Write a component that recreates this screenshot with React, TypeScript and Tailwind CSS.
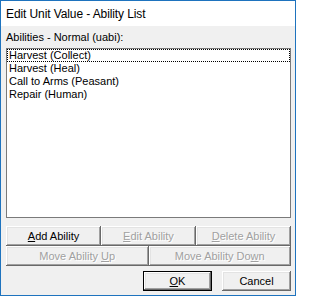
import React from "react";

const font = { fontFamily: '"Liberation Sans", Arial, sans-serif' };

function Btn({
  children,
  disabled,
  isDefault,
  className = "",
}: {
  children: React.ReactNode;
  disabled?: boolean;
  isDefault?: boolean;
  className?: string;
}) {
  return (
    <div
      className={
        "h-[20px] flex items-center justify-center bg-[#f0f0f0] text-[11px] leading-[13px] " +
        (isDefault
          ? "border border-black shadow-[inset_-1px_-1px_#696969,inset_1px_1px_#fff,inset_-2px_-2px_#a0a0a0,inset_2px_2px_#e3e3e3] "
          : "shadow-[inset_-1px_-1px_#696969,inset_1px_1px_#fff,inset_-2px_-2px_#a0a0a0,inset_2px_2px_#e3e3e3] ") +
        (disabled ? "text-[#a0a0a0] [text-shadow:1px_1px_0_#fff] " : "text-black ") +
        className
      }
    >
      <span>{children}</span>
    </div>
  );
}

export default function App() {
  const items = [
    "Harvest (Collect)",
    "Harvest (Heal)",
    "Call to Arms (Peasant)",
    "Repair (Human)",
  ];
  return (
    <div
      className="w-[296px] h-[296px] border border-[#1e73be] flex flex-col bg-[#f0f0f0]"
      style={font}
    >
      <div className="h-[25px] bg-white flex items-center pl-[5px] shrink-0">
        <span className="text-[12px] leading-[14px] text-black pt-[1px] tracking-[-0.1px]">
          Edit Unit Value - Ability List
        </span>
      </div>
      <div className="flex-1 flex flex-col pl-[5px] pr-[4px] pt-[5px]">
        <div className="h-[13px] text-[11px] leading-[13px] text-black">
          Abilities - Normal (uabi):
        </div>
        <div className="mt-[4px] h-[170px] bg-white border border-[#7a7a7a] flex flex-col">
          {items.map((it, i) => (
            <div
              key={it}
              className={
                "h-[13px] text-[11px] leading-[11px] text-black pl-[1px] " +
                (i === 0 ? "border border-dotted border-black" : "border border-transparent")
              }
            >
              {it}
            </div>
          ))}
        </div>
        <div className="mt-[8px] grid grid-cols-3">
          <Btn>
            <u>A</u>dd Ability
          </Btn>
          <Btn disabled>
            <u>E</u>dit Ability
          </Btn>
          <Btn disabled>
            <u>D</u>elete Ability
          </Btn>
        </div>
        <div className="grid grid-cols-2">
          <Btn disabled>
            Move Ability <u>U</u>p
          </Btn>
          <Btn disabled>
            Move Ability Do<u>w</u>n
          </Btn>
        </div>
        <div className="mt-[5px] flex justify-end gap-[10px]">
          <Btn isDefault className="w-[69px]">
            <u>O</u>K
          </Btn>
          <Btn className="w-[69px]">Cancel</Btn>
        </div>
      </div>
    </div>
  );
}
